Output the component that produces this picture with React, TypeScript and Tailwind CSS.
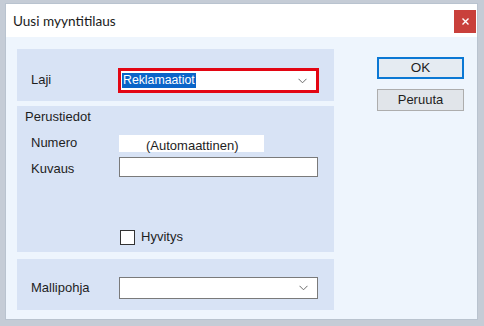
import React from 'react'

function Chevron() {
  return (
    <svg width="9" height="6" viewBox="0 0 9 6" className="shrink-0">
      <path d="M0.5 0.8 L4.5 4.8 L8.5 0.8" fill="none" stroke="#6b6b6b" strokeWidth="1" />
    </svg>
  )
}

export default function App() {
  return (
    <div
      className="w-[484px] h-[326px] bg-[#c5ccd6] pl-[5px] pt-[3px] overflow-hidden"
      style={{ fontFamily: '"Liberation Sans", Arial, sans-serif' }}
    >
      <div className="w-[473px] h-[317px] flex flex-col bg-white border border-[#b9c3cf]">
        {/* Title bar */}
        <div className="h-[33px] flex items-start justify-between pl-[7px] pr-[1px] shrink-0">
          <span
            className="mt-[9px] text-[13.6px] leading-[17px] text-[#1a1a1a]"
            style={{ fontFamily: 'Lato, "Noto Sans", sans-serif' }}
          >
            Uusi myyntitilaus
          </span>
          <div className="mt-[6px] w-[22px] h-[23px] bg-[#c9403b] flex items-center justify-center">
            <svg width="7" height="7" viewBox="0 0 7 7">
              <path d="M0.5 0.5 L6.5 6.5 M6.5 0.5 L0.5 6.5" stroke="white" strokeWidth="1.4" />
            </svg>
          </div>
        </div>

        {/* Body */}
        <div className="flex-1 bg-[#eef5fd] flex pl-[11px] pt-[12px]">
          <div className="w-[317px] flex flex-col">
            {/* Laji */}
            <div className="h-[52px] bg-[#d8e3f5] flex items-start pl-[14px] pt-[19px]">
              <span className="w-[87px] mt-[4px] text-[13px] leading-[16px] text-[#1e1e1e]">Laji</span>
              <div className="w-[201px] h-[25px] border-[3px] border-[#e30613] bg-white flex items-center justify-between pl-[1px] pr-[9px]">
                <span className="bg-[#0a64c8] text-white text-[12.3px] leading-[15px] px-[1px]">Reklamaatiot</span>
                <Chevron />
              </div>
            </div>

            {/* Perustiedot */}
            <div className="mt-[5px] h-[146px] bg-[#d8e3f5] flex flex-col pl-[8px]">
              <span className="mt-[3px] text-[13px] leading-[16px] text-[#1e1e1e]">Perustiedot</span>
              <div className="mt-[10px] flex items-center pl-[6px]">
                <span className="w-[88px] text-[13px] leading-[16px] text-[#1e1e1e] -mt-[2px]">Numero</span>
                <div className="w-[145px] h-[17px] bg-white flex items-end pl-[27px]">
                  <span className="text-[13px] leading-[15px] text-[#1e1e1e] -mb-[1px]">(Automaattinen)</span>
                </div>
              </div>
              <div className="mt-[5px] flex items-center pl-[6px]">
                <span className="w-[88px] text-[13px] leading-[16px] text-[#1e1e1e] mt-[3px]">Kuvaus</span>
                <div className="w-[199px] h-[20px] bg-white border border-[#7a7a7a]" />
              </div>
              <div className="mt-[52px] flex items-center pl-[95px]">
                <div className="w-[15px] h-[15px] bg-white border border-[#333]" />
                <span className="ml-[6px] text-[13px] leading-[16px] text-[#1e1e1e]">Hyvitys</span>
              </div>
            </div>

            {/* Mallipohja */}
            <div className="mt-[7px] h-[51px] bg-[#d8e3f5] flex items-start pl-[14px] pt-[18px]">
              <span className="w-[88px] mt-[3px] text-[13px] leading-[16px] text-[#1e1e1e]">Mallipohja</span>
              <div className="w-[199px] h-[22px] border border-[#7a7a7a] bg-white flex items-center justify-end pr-[9px]">
                <Chevron />
              </div>
            </div>
          </div>

          {/* Buttons */}
          <div className="ml-[43px] flex flex-col pt-[8px]">
            <button className="w-[87px] h-[22px] border-2 border-[#0b78d4] bg-[#e5ebf2] text-[13.5px] leading-[16px] text-[#1e1e1e]">
              OK
            </button>
            <button className="mt-[10px] w-[87px] h-[22px] border border-[#adadad] bg-[#e1e5ea] text-[13px] leading-[16px] text-[#1e1e1e]">
              Peruuta
            </button>
          </div>
        </div>
      </div>
    </div>
  )
}
